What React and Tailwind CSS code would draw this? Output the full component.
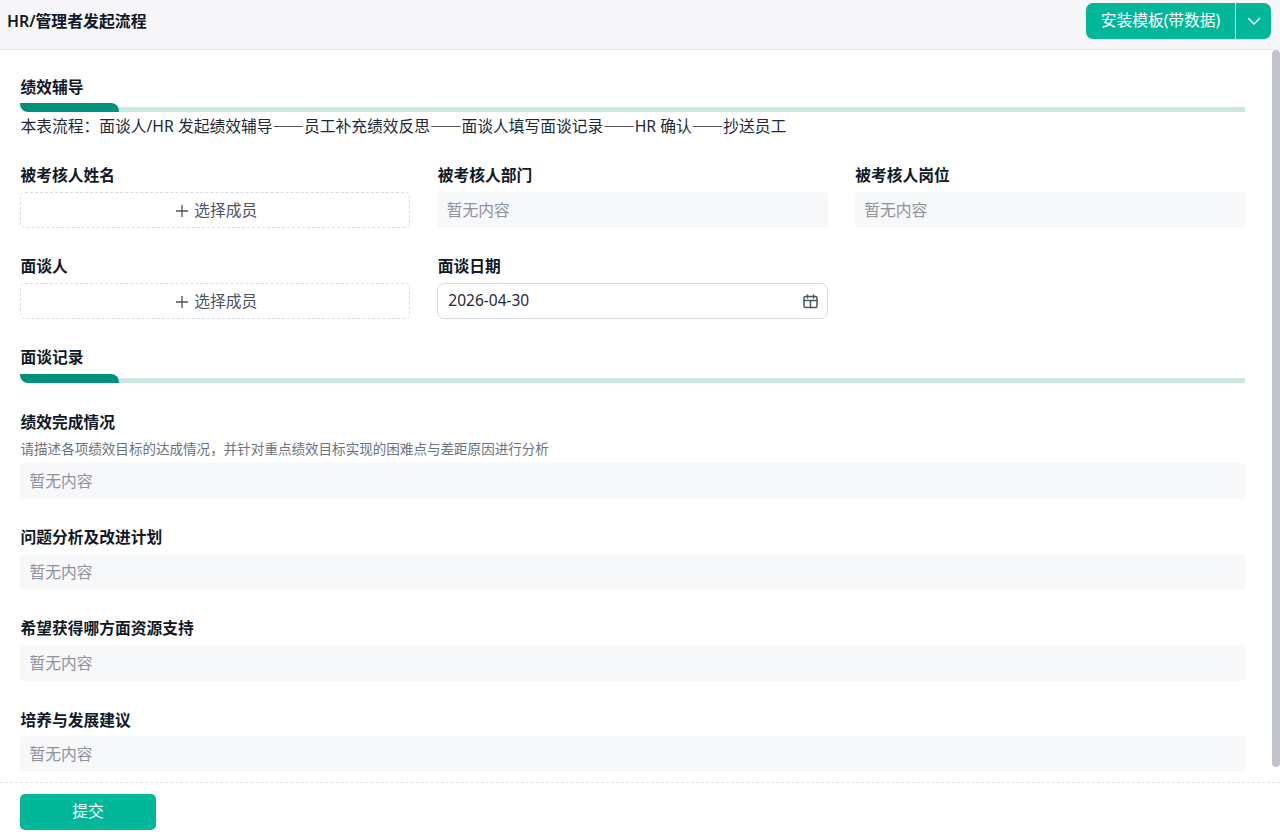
import React from "react";

const Label = ({ children, className = "" }) => (
  <div className={"pl-[0.5px] text-[15.75px] leading-[22px] font-semibold text-[#111827] " + className}>{children}</div>
);

const Bar = () => (
  <div className="flex items-end h-[9px]">
    <div className="w-[98.5px] h-[9px] bg-[#00917c] rounded-tr-[8px] rounded-bl-[8px]" />
    <div className="flex-1 h-[5px] bg-[#cce6e2]" />
  </div>
);

const Empty = ({ className = "" }) => (
  <div className={"h-9 bg-[#f7f8fa] rounded-[3px] pt-[2px] px-[9.5px] flex items-center text-[15.75px] text-[#8f939c] " + className}>暂无内容</div>
);

const Plus = () => (
  <svg width="14" height="14" viewBox="0 0 14 14" fill="none" stroke="#4b5563" strokeWidth="1.3">
    <path d="M7 1v12M1 7h12" />
  </svg>
);

const Select = () => (
  <div className="h-9 pt-px pl-[2px] rounded-[5px] border border-dashed border-[#d8dbe3] flex items-center justify-center gap-[5px] text-[15.75px] text-[#4b5563]">
    <Plus />
    <span>选择成员</span>
  </div>
);

const Calendar = () => (
  <svg width="15" height="15" viewBox="0 0 15 15" fill="none" stroke="#4b5563" strokeWidth="1.5" strokeLinecap="round">
    <rect x="1" y="2.5" width="13" height="11" rx="1.5" />
    <path d="M1 6.5h13M4.5 1v3M10.5 1v3M7.5 6.5v7" />
  </svg>
);

const Dash = () => <span lang="zh-CN" className="font-['Noto_Sans_CJK_SC',sans-serif] [font-feature-settings:'fwid']">{"\u2014\u2014"}</span>;

export default function App() {
  return (
    <div className="h-[838px] w-[1280px] overflow-hidden flex flex-col bg-white font-['Noto_Sans','Noto_Sans_CJK_SC',sans-serif] text-[#1f2937]">
      <header className="h-[50px] shrink-0 bg-[#f7f7fa] border-b border-[#e6e7ee] flex items-start justify-between pl-[7px] pr-[9px]">
        <h1 className="mt-[10px] text-[15.875px] leading-[22px] font-semibold text-[#111827]">HR/管理者发起流程</h1>
        <div className="mt-[3px] h-9 w-[185px] flex rounded-[7px] bg-[#00b899] text-white text-[15.75px]">
          <div className="flex-1 flex items-center justify-center">安装模板(带数据)</div>
          <div className="w-9 border-l border-white flex items-center justify-center">
            <svg width="14" height="14" viewBox="0 0 14 14" fill="none" stroke="white" strokeWidth="1.4" strokeLinecap="round" strokeLinejoin="round">
              <path d="M1.5 4.5 7 10l5.5-5.5" />
            </svg>
          </div>
        </div>
      </header>

      <div className="flex h-[732px] shrink-0">
        <main className="flex-1 pl-5 pr-[27px] pt-[26px]">
          <Label>绩效辅导</Label>
          <div className="mt-[5px]"><Bar /></div>
          <p className="pl-[0.5px] text-[15.75px] leading-[24px] text-[#1f2937] mt-[2px]">
            本表流程{"\uFF1A"}面谈人/HR 发起绩效辅导<Dash />员工补充绩效反思<Dash />面谈人填写面谈记录<Dash />HR 确认<Dash />抄送员工
          </p>

          <div className="grid grid-cols-3 gap-x-[27px] gap-y-[28px] mt-[26px]">
            <div>
              <Label className="mb-[6px]">被考核人姓名</Label>
              <Select />
            </div>
            <div>
              <Label className="mb-[6px]">被考核人部门</Label>
              <Empty />
            </div>
            <div>
              <Label className="mb-[6px]">被考核人岗位</Label>
              <Empty />
            </div>
            <div className="-mt-[1px]">
              <Label className="mb-[6px]">面谈人</Label>
              <Select />
            </div>
            <div className="-mt-[1px]">
              <Label className="mb-[6px]">面谈日期</Label>
              <div className="h-9 rounded-[7px] border border-[#d8dbe6] flex items-center justify-between pl-[10px] pr-[9px] text-[15.5px] text-[#1f2937]">
                <span>2026-04-30</span>
                <Calendar />
              </div>
            </div>
          </div>

          <Label className="mt-[27px]">面谈记录</Label>
          <div className="mt-[6px]"><Bar /></div>

          <Label className="mt-[28px]">绩效完成情况</Label>
          <div className="pl-[0.5px] text-[13.55px] leading-[20px] text-[#6b7280] mt-[6px] mb-[4px]">请描述各项绩效目标的达成情况{"\uFF0C"}并针对重点绩效目标实现的困难点与差距原因进行分析</div>
          <Empty />

          <Label className="mt-[27px] mb-[6px]">问题分析及改进计划</Label>
          <Empty />

          <Label className="mt-[27px] mb-[6px]">希望获得哪方面资源支持</Label>
          <Empty />

          <Label className="mt-[28px] mb-[5px]">培养与发展建议</Label>
          <Empty />
        </main>
        <div className="w-2 h-[717px] bg-[#c1c3ca] rounded-[4px]" />
      </div>

      <footer className="flex-1 border-t border-dashed border-[#e0e2e8] pl-5 pt-[10.5px]">
        <button className="w-[136px] h-9 rounded-[5px] bg-[#00b899] text-white text-[15.75px] flex items-center justify-center">提交</button>
      </footer>
    </div>
  );
}
